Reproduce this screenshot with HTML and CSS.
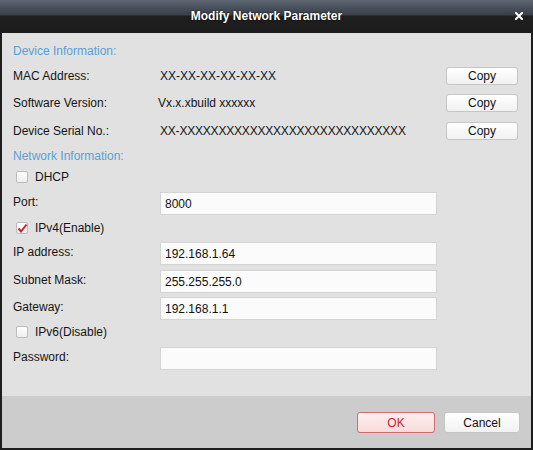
FILE: index.html
```html
<!DOCTYPE html>
<html>
<head>
<meta charset="utf-8">
<link rel="stylesheet" href="styles.css">
</head>
<body>
<div class="win">
  <div class="titlebar">
    <span></span>
    <span class="title">Modify Network Parameter</span>
    <span class="close"><svg width="8" height="8" viewBox="0 0 8 8"><path d="M1 1 L7 7 M7 1 L1 7" stroke="#fff" stroke-width="2" stroke-linecap="square"/></svg></span>
  </div>
  <div class="frame">
    <div class="content">
      <div class="hdr">Device Information:</div>
      <div class="row m6">
        <span class="lbl">MAC Address:</span>
        <span class="val">XX-XX-XX-XX-XX-XX</span>
        <button class="btn copy">Copy</button>
      </div>
      <div class="row m9">
        <span class="lbl">Software Version:</span>
        <span class="val sw">Vx.x.xbuild xxxxxx</span>
        <button class="btn copy">Copy</button>
      </div>
      <div class="row m10">
        <span class="lbl">Device Serial No.:</span>
        <span class="val serial">XX-XXXXXXXXXXXXXXXXXXXXXXXXXXXXX</span>
        <button class="btn copy">Copy</button>
      </div>
      <div class="hdr m6">Network Information:</div>
      <div class="chk m2 h18">
        <span class="box"></span><span>DHCP</span>
      </div>
      <div class="row m6">
        <span class="lbl">Port:</span>
        <span class="input">8000</span>
      </div>
      <div class="chk m4 h17">
        <span class="box"><svg width="12" height="12" viewBox="0 0 12 12"><path d="M2.5 6.5 L5 9.5 L10.5 2.5" fill="none" stroke="#d0202a" stroke-width="2"/></svg></span><span>IPv4(Enable)</span>
      </div>
      <div class="row m6">
        <span class="lbl">IP address:</span>
        <span class="input">192.168.1.64</span>
      </div>
      <div class="row m5">
        <span class="lbl">Subnet Mask:</span>
        <span class="input">255.255.255.0</span>
      </div>
      <div class="row m4">
        <span class="lbl">Gateway:</span>
        <span class="input">192.168.1.1</span>
      </div>
      <div class="chk m3 h18">
        <span class="box"></span><span>IPv6(Disable)</span>
      </div>
      <div class="row m6">
        <span class="lbl">Password:</span>
        <span class="input"></span>
      </div>
    </div>
    <div class="footer">
      <button class="btn ok">OK</button>
      <button class="btn cancel">Cancel</button>
    </div>
  </div>
</div>
</body>
</html>
```
FILE: styles.css
```css
* { box-sizing: border-box; }
html, body { margin: 0; padding: 0; }
body {
  width: 533px;
  height: 450px;
  font-family: "Liberation Sans", Arial, sans-serif;
  font-size: 12px;
  color: #151515;
  background: #1e1e1e;
}
.win {
  width: 533px;
  height: 450px;
  display: flex;
  flex-direction: column;
}
.titlebar {
  height: 33px;
  flex: none;
  display: grid;
  grid-template-columns: 1fr auto 1fr;
  align-items: center;
  background: linear-gradient(#5f6872 0px, #47505a 8px, #39404a 15px, #1f1f1f 16px, #1c1c1c 33px);
  padding-bottom: 1px;
}
.title {
  color: #fff;
  font-weight: bold;
  font-size: 12px;
  text-shadow: 0 0 2px #000;
}
.close {
  justify-self: end;
  padding-right: 10px;
  display: flex;
  align-items: center;
}
.frame {
  flex: 1;
  display: flex;
  flex-direction: column;
  border-left: 2px solid #1e1e1e;
  border-right: 2px solid #1e1e1e;
  border-bottom: 2px solid #1e1e1e;
}
.content {
  height: 363px;
  flex: none;
  background: #e1e1e1;
  padding: 8px 13px 0 11px;
  display: flex;
  flex-direction: column;
}
.hdr {
  height: 20px;
  line-height: 20px;
  color: #5a9fd8;
}
.row {
  display: flex;
  align-items: center;
  height: 18px;
}
.row:has(.input) { height: 23px; }
.row:has(.input) .lbl { margin-bottom: 3px; }
.lbl { width: 147px; flex: none; }
.val { flex: 1; }
.val.sw { margin-left: -2px; }
.val.serial { letter-spacing: -0.2px; }
.m2 { margin-top: 2px; }
.m3 { margin-top: 3px; }
.m4 { margin-top: 4px; }
.m5 { margin-top: 5px; }
.m6 { margin-top: 6px; }
.m9 { margin-top: 9px; }
.m10 { margin-top: 10px; }
.h17 { height: 17px; }
.h18 { height: 18px; }
.chk {
  display: flex;
  align-items: center;
  padding-left: 3px;
}
.box {
  width: 12px;
  height: 12px;
  border: 1px solid #bdbdbd;
  border-radius: 2px;
  background: linear-gradient(#ffffff, #eeeeee);
  margin-right: 7px;
  position: relative;
  display: flex;
  align-items: center;
  justify-content: center;
}
.box svg { position: absolute; left: -1px; top: -1px; }
.input {
  width: 277px;
  height: 23px;
  border: 1px solid #d4d4d4;
  background: #fbfbfb;
  padding-left: 4px;
  display: flex;
  align-items: center;
  font-size: 12px;
  color: #111;
}
.btn {
  font-family: "Liberation Sans", Arial, sans-serif;
  font-size: 12px;
  color: #111;
  border: 1px solid #c6c6c6;
  border-radius: 3px;
  background: linear-gradient(#ffffff, #f1f1f1);
  padding: 0;
  display: flex;
  align-items: center;
  justify-content: center;
}
.copy {
  width: 72px;
  height: 18px;
  flex: none;
}
.footer {
  flex: 1;
  background: #cccccc;
  display: flex;
  justify-content: flex-end;
  align-items: flex-start;
  gap: 9px;
  padding: 16px 11px 0 0;
}
.ok {
  width: 78px;
  height: 21px;
  background: linear-gradient(#fdeeee, #f8dcdc);
  border-color: #d46a6e;
  color: #c4262c;
}
.cancel {
  width: 76px;
  height: 21px;
}
```
